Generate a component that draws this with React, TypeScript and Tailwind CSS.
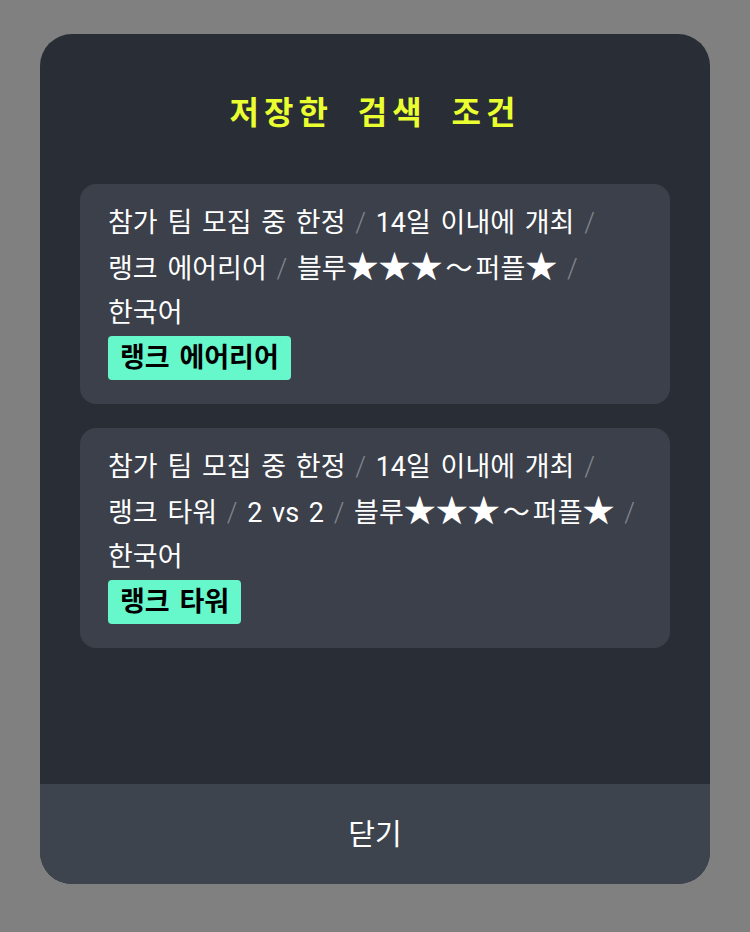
import React from 'react';

interface SavedSearch {
  parts: string[];
  tag: string;
}

const searches: SavedSearch[] = [
  {
    parts: ['참가 팀 모집 중 한정', '14일 이내에 개최', '랭크 에어리어', '블루★★★～퍼플★', '한국어'],
    tag: '랭크 에어리어',
  },
  {
    parts: ['참가 팀 모집 중 한정', '14일 이내에 개최', '랭크 타워', '2 vs 2', '블루★★★～퍼플★', '한국어'],
    tag: '랭크 타워',
  },
];

// stars and the wide tilde get their own boxes so they take the width they have in the app
const Segment: React.FC<{ text: string }> = ({ text }) => (
  <>
    {text.split(/(★+|～)/).map((chunk, i) => {
      if (chunk.startsWith('★')) {
        return (
          <span key={i} className="font-['Noto_Sans_CJK_KR'] text-[32px] leading-[20px]">
            {chunk}
          </span>
        );
      }
      if (chunk === '～') {
        return (
          <span key={i} className="mx-[3px] font-['Noto_Sans_CJK_KR']">
            {chunk}
          </span>
        );
      }
      return <React.Fragment key={i}>{chunk}</React.Fragment>;
    })}
  </>
);

const SearchCard: React.FC<{ item: SavedSearch }> = ({ item }) => (
  <div className="rounded-2xl bg-[#3b404a] pl-7 pr-[24px] pt-[17px] pb-[24px]">
    <p className="break-keep text-[27px] leading-[44px] text-white [word-spacing:3px]">
      {item.parts.map((part, i) => (
        <React.Fragment key={i}>
          <Segment text={part} />
          {i < item.parts.length - 1 && (
            <>
              {' '}
              <span className="font-light text-[#80848c]">/</span>{' '}
            </>
          )}
        </React.Fragment>
      ))}
    </p>
    <div className="mt-[1px] flex">
      <span className="rounded-[4px] bg-[#66f7cb] px-3 text-[27px] font-bold leading-[44px] text-black [word-spacing:3px]">
        {item.tag}
      </span>
    </div>
  </div>
);

export default function App() {
  return (
    <div
      className="flex min-h-screen w-full justify-center bg-[#808080] pt-[34px]"
      style={{ fontFamily: 'Roboto, "Noto Sans CJK KR", sans-serif' }}
    >
      <div className="flex h-[850px] w-[670px] flex-col overflow-hidden rounded-[32px] bg-[#292d35]">
        <div className="flex-1 px-10">
          <h1 className="pt-[56px] pb-[48px] text-center text-[32px] font-bold leading-[46px] tracking-[5px] text-[#e9ff30] [word-spacing:12px]">
            저장한 검색 조건
          </h1>
          <div className="flex flex-col gap-6">
            {searches.map((s, i) => (
              <SearchCard key={i} item={s} />
            ))}
          </div>
        </div>
        <button className="h-[100px] w-full bg-[#3e444e] pt-1 text-[29px] text-white">닫기</button>
      </div>
    </div>
  );
}
